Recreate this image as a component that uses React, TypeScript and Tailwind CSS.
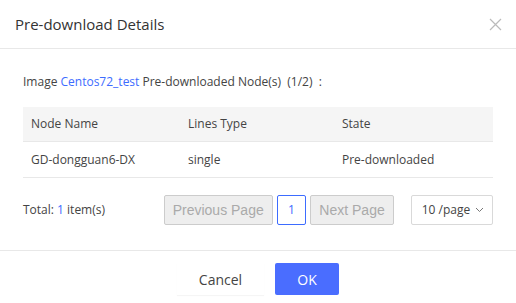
import React from "react";

export default function App() {
  const font = { fontFamily: '"Open Sans", sans-serif' };
  return (
    <div className="w-[516px] h-[303px] bg-white text-[#333]" style={font}>
      <div className="h-[49px] border-b border-[#e8e8e8] flex items-center justify-between pl-[15px] pr-[14px]">
        <div className="text-[15px] text-[#333]">Pre-download Details</div>
        <svg width="13" height="13" viewBox="0 0 13 13" className="mt-[1px]">
          <path d="M1 1L12 12M12 1L1 12" stroke="#bbb" strokeWidth="1.2" />
        </svg>
      </div>
      <div className="px-[23px] pt-[23px]">
        <div className="text-[12px] text-[#444] h-[20px] flex items-center whitespace-pre">
          Image <span className="text-[#3d6cff]">Centos72_test</span> Pre-downloaded Node(s)  (1/2)  :
        </div>
        <div className="mt-[15px] text-[12px] text-[#444]">
          <div className="grid grid-cols-[157px_154px_160px] h-[35px] bg-[#f5f5f5] border-b border-[#e8e8e8] items-center">
            <div className="pl-[8px]">Node Name</div>
            <div className="pl-[8px]">Lines Type</div>
            <div className="pl-[8px]">State</div>
          </div>
          <div className="grid grid-cols-[157px_154px_160px] h-[36px] border-b border-[#e8e8e8] items-center">
            <div className="pl-[8px]">GD-dongguan6-DX</div>
            <div className="pl-[8px]">single</div>
            <div className="pl-[8px]">Pre-downloaded</div>
          </div>
        </div>
        <div className="mt-[17px] h-[30px] flex items-center">
          <div className="text-[12px] text-[#444] w-[142px]">
            Total: <span className="text-[#3d6cff]">1</span> item(s)
          </div>
          <div
            className="h-[30px] w-[110px] bg-[#eee] border border-[#ccc] rounded-[2px] text-[#aaa] text-[14px] flex items-center justify-center"
            style={{ fontFamily: '"Liberation Sans", Arial, sans-serif' }}
          >
            Previous Page
          </div>
          <div className="ml-[4px] h-[30px] w-[30px] border border-[#3d6cff] rounded-[2px] text-[#3d6cff] text-[12px] flex items-center justify-center">
            1
          </div>
          <div
            className="ml-[4px] h-[30px] w-[84px] bg-[#eee] border border-[#ccc] rounded-[2px] text-[#aaa] text-[14px] flex items-center justify-center"
            style={{ fontFamily: '"Liberation Sans", Arial, sans-serif' }}
          >
            Next Page
          </div>
          <div className="ml-[17px] h-[30px] w-[83px] border border-[#d9d9d9] rounded-[2px] text-[12px] text-[#444] flex items-center pl-[10px] gap-[5px]">
            <span>10 /page</span>
            <svg width="9" height="6" viewBox="0 0 9 6">
              <path d="M1 1L4.5 4.5L8 1" stroke="#777" strokeWidth="1" fill="none" />
            </svg>
          </div>
        </div>
      </div>
      <div className="mt-[25px] border-t border-[#e8e8e8] flex justify-center gap-[11px] pt-[12px]">
        <div className="h-[32px] w-[87px] flex items-center justify-center text-[14px] text-[#444] bg-white shadow-[0_1px_1px_rgba(0,0,0,0.04)]">
          Cancel
        </div>
        <div className="h-[32px] w-[64px] rounded-[2px] bg-[#4a6dff] text-white text-[14px] flex items-center justify-center">
          OK
        </div>
      </div>
    </div>
  );
}
